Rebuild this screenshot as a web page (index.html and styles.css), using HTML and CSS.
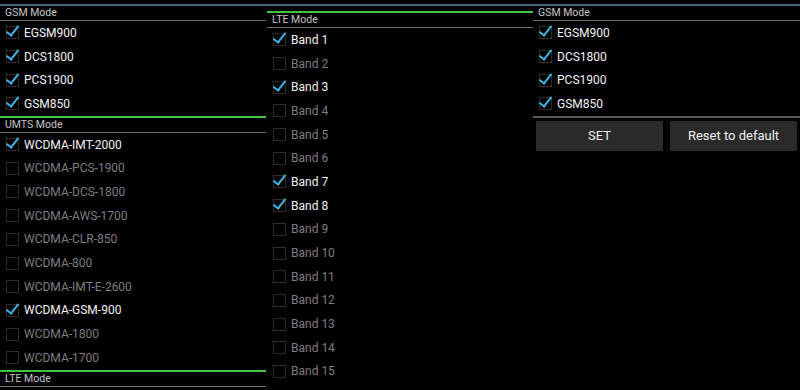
FILE: index.html
```html
<!DOCTYPE html>
<html lang="en">
<head>
  <meta charset="UTF-8" />
  <title>Band Mode</title>
  <link rel="stylesheet" href="styles.css">
</head>
<body>
  <div class="topline"></div>
  <div class="columns">

    <!-- GSM / UMTS / LTE -->
    <div class="col">
      <div class="header">GSM Mode</div>
      <div class="item on"><span class="box"></span>EGSM900</div>
      <div class="item on"><span class="box"></span>DCS1800</div>
      <div class="item on"><span class="box"></span>PCS1900</div>
      <div class="item on"><span class="box"></span>GSM850</div>
      <div class="sep green"></div>
      <div class="header">UMTS Mode</div>
      <div class="item on"><span class="box"></span>WCDMA-IMT-2000</div>
      <div class="item"><span class="box"></span>WCDMA-PCS-1900</div>
      <div class="item"><span class="box"></span>WCDMA-DCS-1800</div>
      <div class="item"><span class="box"></span>WCDMA-AWS-1700</div>
      <div class="item"><span class="box"></span>WCDMA-CLR-850</div>
      <div class="item"><span class="box"></span>WCDMA-800</div>
      <div class="item"><span class="box"></span>WCDMA-IMT-E-2600</div>
      <div class="item on"><span class="box"></span>WCDMA-GSM-900</div>
      <div class="item"><span class="box"></span>WCDMA-1800</div>
      <div class="item"><span class="box"></span>WCDMA-1700</div>
      <div class="sep green"></div>
      <div class="header">LTE Mode</div>
    </div>

    <!-- LTE bands -->
    <div class="col shifted">
      <div class="sep green"></div>
      <div class="header">LTE Mode</div>
      <div class="item on"><span class="box"></span>Band 1</div>
      <div class="item"><span class="box"></span>Band 2</div>
      <div class="item on"><span class="box"></span>Band 3</div>
      <div class="item"><span class="box"></span>Band 4</div>
      <div class="item"><span class="box"></span>Band 5</div>
      <div class="item"><span class="box"></span>Band 6</div>
      <div class="item on"><span class="box"></span>Band 7</div>
      <div class="item on"><span class="box"></span>Band 8</div>
      <div class="item"><span class="box"></span>Band 9</div>
      <div class="item"><span class="box"></span>Band 10</div>
      <div class="item"><span class="box"></span>Band 11</div>
      <div class="item"><span class="box"></span>Band 12</div>
      <div class="item"><span class="box"></span>Band 13</div>
      <div class="item"><span class="box"></span>Band 14</div>
      <div class="item"><span class="box"></span>Band 15</div>
    </div>

    <!-- GSM + actions -->
    <div class="col">
      <div class="header">GSM Mode</div>
      <div class="item on"><span class="box"></span>EGSM900</div>
      <div class="item on"><span class="box"></span>DCS1800</div>
      <div class="item on"><span class="box"></span>PCS1900</div>
      <div class="item on"><span class="box"></span>GSM850</div>
      <div class="sep gray"></div>
      <div class="buttons">
        <button>SET</button>
        <button>Reset to default</button>
      </div>
    </div>

  </div>
</body>
</html>
```

FILE: styles.css
```css
* {
  margin: 0;
  padding: 0;
  box-sizing: border-box;
}

html, body {
  background: #000;
  height: 100%;
  overflow: hidden;
}

body {
  font-family: Roboto, "Liberation Sans", sans-serif;
  color: #eee;
  padding-top: 4px;
}

.topline {
  height: 2px;
  background: #44697f;
}

.columns {
  display: grid;
  grid-template-columns: 266px 267px 267px;
}

.col {
  display: flex;
  flex-direction: column;
  min-width: 0;
}

.col.shifted {
  padding-top: 5px;
  padding-left: 1px;
}

.header {
  height: 15px;
  line-height: 14px;
  padding-left: 5px;
  font-size: 10.5px;
  color: #c4c4c4;
  border-bottom: 1px solid #6e6e6e;
}

.sep {
  height: 2px;
  flex: none;
}

.sep.green {
  background: #3ec63e;
}

.sep.gray {
  background: #5a5a5a;
}

.item {
  height: 23.7px;
  flex: none;
  display: flex;
  align-items: center;
  padding-left: 6px;
  font-size: 12px;
  color: #7d7d7d;
  white-space: nowrap;
}

.item.on {
  color: #f2f2f2;
}

.box {
  position: relative;
  width: 13px;
  height: 13px;
  border: 1px solid #2c2c2c;
  margin-right: 5px;
  flex: none;
}

/* holo style tick that pokes out of the box */
.item.on .box::after {
  content: "";
  position: absolute;
  left: 2px;
  top: -4px;
  width: 5px;
  height: 11px;
  border-right: 2.5px solid #3fb4e3;
  border-bottom: 2.5px solid #3fb4e3;
  transform: rotate(38deg);
  transform-origin: center;
}

.buttons {
  display: flex;
  gap: 7px;
  padding: 3px 3px 0 3px;
}

button {
  flex: 1;
  height: 30px;
  background: #2a2a2a;
  color: #f0f0f0;
  border: none;
  font-family: Roboto, "Liberation Sans", sans-serif;
  font-size: 13px;
}
```
